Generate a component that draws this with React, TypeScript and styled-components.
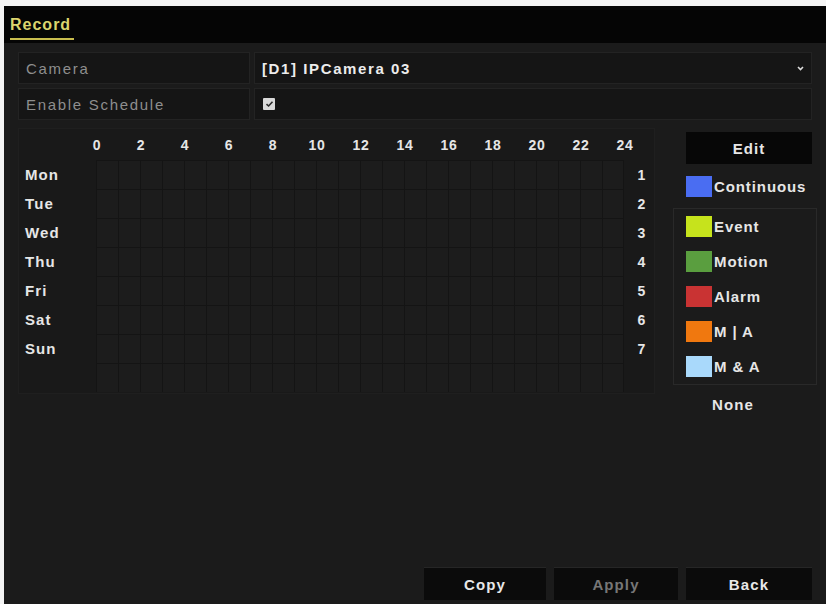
import React from "react";
import styled, { createGlobalStyle } from "styled-components";

const GlobalStyle = createGlobalStyle`
  html, body {
    margin: 0;
    padding: 0;
    background: #f4f4f4;
  }
  body {
    font-family: "Liberation Sans", Arial, sans-serif;
  }
`;

const Screen = styled.div`
  margin: 6px 0 0 4px;
  width: 822px;
  height: 598px;
  background: #1b1b1b;
  display: flex;
  flex-direction: column;
  color: #e6e6e6;
  font-weight: bold;
  font-size: 15px;
  letter-spacing: 1.1px;
`;

const TitleBar = styled.div`
  height: 37px;
  background: #050505;
  padding-left: 6px;
  display: flex;
  align-items: stretch;
`;

const Tab = styled.div`
  color: #dcd56e;
  font-size: 16px;
  letter-spacing: 1px;
  padding: 10px 3px 0 0;
  border-bottom: 2px solid #c9bd4e;
  margin-bottom: 3px;
  box-sizing: border-box;
`;

const Content = styled.div`
  flex: 1;
  padding: 9px 14px 0 14px;
  display: flex;
  flex-direction: column;
`;

const FormRow = styled.div`
  display: grid;
  grid-template-columns: 232px 1fr;
  gap: 4px;
  height: 32px;
  margin-bottom: 4px;
`;

const Cell = styled.div<{ $muted?: boolean }>`
  background: #151515;
  border: 1px solid #232323;
  display: flex;
  align-items: center;
  padding: 0 7px;
  color: ${(p) => (p.$muted ? "#8e8e8e" : "#ececec")};
  font-weight: ${(p) => (p.$muted ? "normal" : "bold")};
  letter-spacing: ${(p) => (p.$muted ? "1.7px" : "1.6px")};
`;

const SelectValue = styled.span`
  flex: 1;
`;

const Checkbox = styled.span`
  width: 12px;
  height: 12px;
  background: #d9d9d9;
  border-radius: 1px;
  display: flex;
  align-items: center;
  justify-content: center;
  margin-left: 1px;
`;

const Main = styled.div`
  display: flex;
  margin-top: 4px;
`;

const SchedulePanel = styled.div`
  width: 637px;
  height: 266px;
  background: #191919;
  border: 1px solid #1f1f1f;
  box-sizing: border-box;
  display: flex;
  flex-direction: column;
`;

const HourRow = styled.div`
  height: 31px;
  display: flex;
  align-items: center;
  padding-left: 56px;
`;

const Hour = styled.span`
  width: 44px;
  text-align: center;
  font-size: 14px;
  letter-spacing: 0.8px;
`;

const Body = styled.div`
  display: grid;
  grid-template-columns: 77px 528px 1fr;
`;

const DayCol = styled.div`
  display: flex;
  flex-direction: column;
`;

const DayLabel = styled.div`
  height: 29px;
  display: flex;
  align-items: center;
  padding-left: 6px;
`;

const Grid = styled.div`
  height: 232px;
  background-color: #1c1c1c;
  background-image: repeating-linear-gradient(
      to right,
      #141414 0,
      #141414 1px,
      transparent 1px,
      transparent 22px
    ),
    repeating-linear-gradient(
      to bottom,
      #141414 0,
      #141414 1px,
      transparent 1px,
      transparent 29px
    );
  border-right: 1px solid #141414;
`;

const NumCol = styled.div`
  display: flex;
  flex-direction: column;
  align-items: center;
  padding-left: 6px;
`;

const NumLabel = styled.div`
  height: 29px;
  display: flex;
  align-items: center;
  font-size: 14px;
`;

const Legend = styled.div`
  width: 126px;
  margin-left: 31px;
  display: flex;
  flex-direction: column;
`;

const EditButton = styled.div`
  height: 32px;
  margin-top: 4px;
  background: #070707;
  display: flex;
  align-items: center;
  justify-content: center;
`;

const LegendGroup = styled.div`
  margin: 0 -5px 0 -13px;
  padding: 0 5px 0 12px;
  border: 1px solid #292929;
`;

const LegendItem = styled.div<{ $h?: number }>`
  height: ${(p) => p.$h ?? 35}px;
  display: flex;
  align-items: center;
  gap: 2px;
  letter-spacing: 0.9px;
`;

const Swatch = styled.span<{ $color: string }>`
  flex: none;
  width: 26px;
  height: 21px;
  background: ${(p) => p.$color};
`;

const NoneLabel = styled.div`
  height: 38px;
  display: flex;
  align-items: center;
  padding-left: 26px;
`;

const Footer = styled.div`
  margin-top: auto;
  display: flex;
  justify-content: flex-end;
  gap: 8px;
  padding-bottom: 4px;
`;

const FooterButton = styled.div<{ $disabled?: boolean; $w: number }>`
  width: ${(p) => p.$w}px;
  height: 32px;
  background: #0b0b0b;
  border-top: 1px solid #262626;
  display: flex;
  align-items: center;
  justify-content: center;
  color: ${(p) => (p.$disabled ? "#777777" : "#e8e8e8")};
`;

const hours = [0, 2, 4, 6, 8, 10, 12, 14, 16, 18, 20, 22, 24];
const days = ["Mon", "Tue", "Wed", "Thu", "Fri", "Sat", "Sun"];

const legend = [
  { label: "Event", color: "#c6e31c" },
  { label: "Motion", color: "#5a9e3f" },
  { label: "Alarm", color: "#c93333" },
  { label: "M | A", color: "#f0780f" },
  { label: "M & A", color: "#a9d9fb" },
];

export default function App() {
  return (
    <Screen>
      <GlobalStyle />
      <TitleBar>
        <Tab>Record</Tab>
      </TitleBar>
      <Content>
        <FormRow>
          <Cell $muted>Camera</Cell>
          <Cell>
            <SelectValue>[D1] IPCamera 03</SelectValue>
            <svg width="7" height="5" viewBox="0 0 7 5">
              <path d="M1 1 L3.5 3.5 L6 1" stroke="#dcdcdc" strokeWidth="1.6" fill="none" />
            </svg>
          </Cell>
        </FormRow>
        <FormRow>
          <Cell $muted>Enable Schedule</Cell>
          <Cell>
            <Checkbox>
              <svg width="9" height="8" viewBox="0 0 9 8">
                <path d="M1.5 4.2 L3.6 6 L7.5 1.8" stroke="#2a2a2a" strokeWidth="1.6" fill="none" />
              </svg>
            </Checkbox>
          </Cell>
        </FormRow>
        <Main>
          <SchedulePanel>
            <HourRow>
              {hours.map((h) => (
                <Hour key={h}>{h}</Hour>
              ))}
            </HourRow>
            <Body>
              <DayCol>
                {days.map((d) => (
                  <DayLabel key={d}>{d}</DayLabel>
                ))}
              </DayCol>
              <Grid />
              <NumCol>
                {days.map((d, i) => (
                  <NumLabel key={d}>{i + 1}</NumLabel>
                ))}
              </NumCol>
            </Body>
          </SchedulePanel>
          <Legend>
            <EditButton>Edit</EditButton>
            <LegendItem $h={44}>
              <Swatch $color="#4a6df2" />
              Continuous
            </LegendItem>
            <LegendGroup>
              {legend.map((l) => (
                <LegendItem key={l.label}>
                  <Swatch $color={l.color} />
                  {l.label}
                </LegendItem>
              ))}
            </LegendGroup>
            <NoneLabel>None</NoneLabel>
          </Legend>
        </Main>
        <Footer>
          <FooterButton $w={122}>Copy</FooterButton>
          <FooterButton $w={124} $disabled>
            Apply
          </FooterButton>
          <FooterButton $w={126}>Back</FooterButton>
        </Footer>
      </Content>
    </Screen>
  );
}
